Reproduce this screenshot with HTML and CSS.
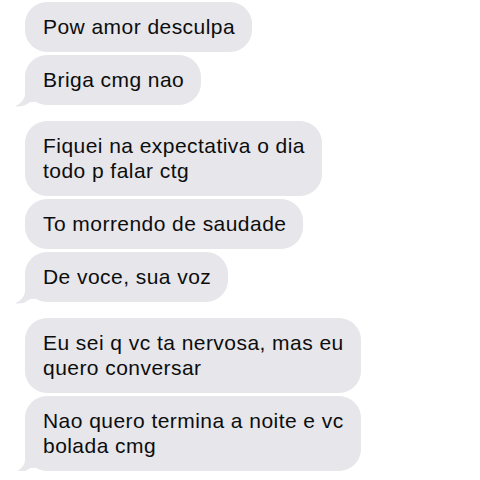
FILE: index.html
```html
<!DOCTYPE html>
<html lang="pt">
<head>
<meta charset="utf-8">
<link rel="stylesheet" href="styles.css">
</head>
<body>
<div class="thread">
  <div class="group">
    <div class="bubble">Pow amor desculpa</div>
    <div class="bubble tail">Briga cmg nao<svg class="tail-svg" viewBox="0 0 20 22" width="20" height="22"><path d="M10 0 L10 9 C10 14 6 18.5 0 21.5 C6 22 11 20.5 15 17 L20 17 L20 0 Z"/></svg></div>
  </div>
  <div class="group">
    <div class="bubble">Fiquei na expectativa o dia<br>todo p falar ctg</div>
    <div class="bubble">To morrendo de saudade</div>
    <div class="bubble tail">De voce, sua voz<svg class="tail-svg" viewBox="0 0 20 22" width="20" height="22"><path d="M10 0 L10 9 C10 14 6 18.5 0 21.5 C6 22 11 20.5 15 17 L20 17 L20 0 Z"/></svg></div>
  </div>
  <div class="group">
    <div class="bubble">Eu sei q vc ta nervosa, mas eu<br>quero conversar</div>
    <div class="bubble tail">Nao quero termina a noite e vc<br>bolada cmg<svg class="tail-svg" viewBox="0 0 20 22" width="20" height="22"><path d="M10 0 L10 9 C10 14 6 18.5 0 21.5 C6 22 11 20.5 15 17 L20 17 L20 0 Z"/></svg></div>
  </div>
</div>
</body>
</html>
```
FILE: styles.css
```css
html, body {
  margin: 0;
  padding: 0;
  background: #ffffff;
}
body {
  font-family: "Liberation Sans", Arial, sans-serif;
  color: #0d0d0d;
}
.thread {
  display: flex;
  flex-direction: column;
  gap: 16px;
  padding: 2px 0 0 25px;
}
.group {
  display: flex;
  flex-direction: column;
  align-items: flex-start;
  gap: 3px;
}
.bubble {
  position: relative;
  background: #e6e6eb;
  border-radius: 22px;
  padding: 12px 17px 13px 18px;
  font-size: 21px;
  line-height: 25px;
  letter-spacing: 0.45px;
  white-space: nowrap;
}
.tail-svg {
  position: absolute;
  left: -10px;
  bottom: -2px;
  fill: #e6e6eb;
}
```
